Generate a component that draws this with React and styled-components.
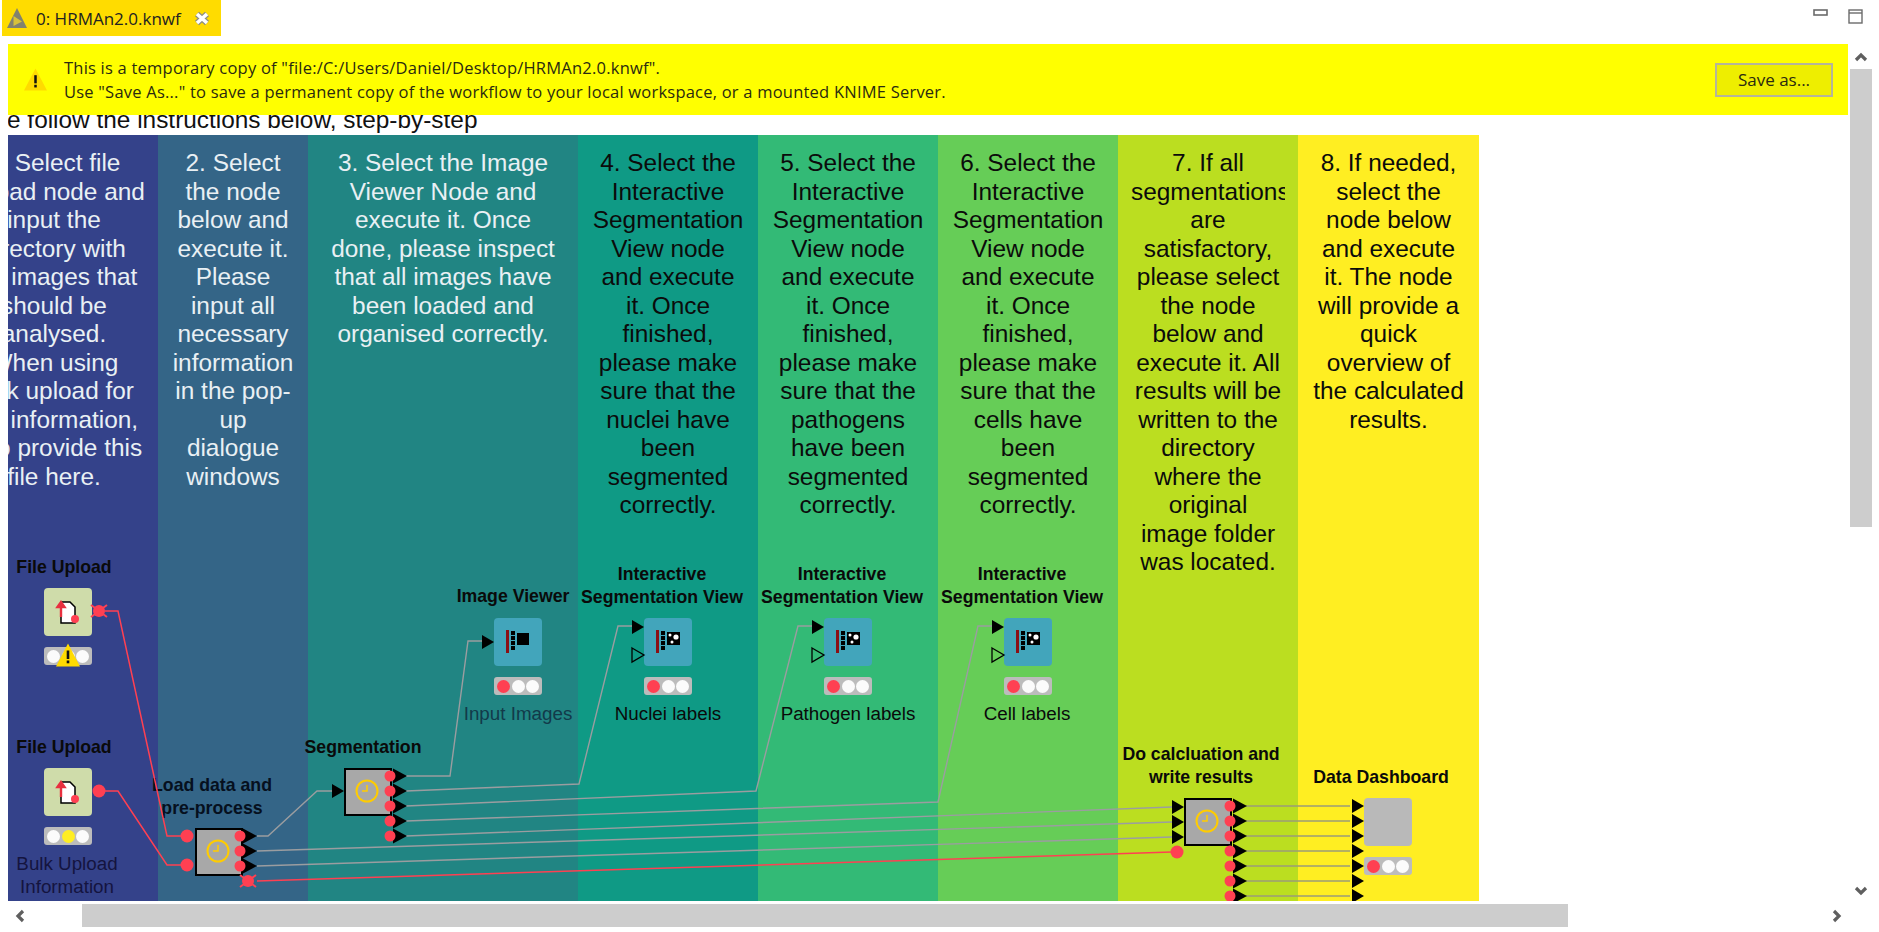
import React from "react";
import styled, { createGlobalStyle } from "styled-components";

// the workflow canvas is scrolled: its origin sits left of the window
const ORIGIN_X = -54;
const ORIGIN_Y = 115;

const GlobalStyle = createGlobalStyle`
  html, body {
    margin: 0;
    padding: 0;
    background: #fff;
    overflow: hidden;
  }
`;

const Page = styled.div`
  width: 1879px;
  height: 932px;
  display: flex;
  flex-direction: column;
  overflow: hidden;
  background: #fff;
  font-family: "Liberation Sans", Arial, sans-serif;
`;

const TabRow = styled.div`
  flex: 0 0 44px;
  display: flex;
  align-items: flex-start;
  padding-left: 2px;
`;

const Tab = styled.div`
  width: 219px;
  height: 36px;
  background: #ffdc00;
  display: flex;
  align-items: center;
  padding-left: 5px;
  box-sizing: border-box;
  font-family: "Open Sans", sans-serif;
  font-size: 17px;
  color: #222;
`;

const TabTitle = styled.span`
  width: 158px;
  margin-left: 9px;
  white-space: nowrap;
`;

const WindowButtons = styled.div`
  margin-left: auto;
  padding: 9px 16px 0 0;
  display: flex;
  gap: 20px;
`;

const Main = styled.div`
  flex: 0 0 857px;
  display: flex;
  gap: 2px;
  padding-left: 8px;
  min-height: 0;
`;

const Editor = styled.div`
  flex: 0 0 1840px;
  display: flex;
  flex-direction: column;
  min-height: 0;
`;

const Banner = styled.div`
  flex: 0 0 71px;
  background: #ffff00;
  display: flex;
  align-items: center;
  padding: 0 15px 0 16px;
  box-sizing: border-box;
`;

const BannerText = styled.div`
  margin-left: 17px;
  font-family: "Open Sans", sans-serif;
  font-size: 16.5px;
  letter-spacing: 0.22px;
  line-height: 24px;
  color: #2a2a10;
  white-space: nowrap;
`;

const SaveButton = styled.button`
  margin-left: auto;
  width: 118px;
  height: 34px;
  background: #eeee00;
  border: 2px solid #b5b59a;
  font-family: "Open Sans", sans-serif;
  font-size: 17px;
  color: #2a2a10;
  padding: 0;
`;

const Viewport = styled.div`
  flex: 1;
  overflow: hidden;
  min-height: 0;
`;

const Canvas = styled.div`
  position: relative;
  width: 1533px;
  height: 786px;
  margin-left: ${ORIGIN_X - 8}px;
`;

const Heading = styled.div`
  height: 20px;
  font-size: 24.4px;
  line-height: 9px;
  color: #111;
  white-space: nowrap;
`;

const Notes = styled.div`
  display: flex;
  height: 766px;
`;

const Note = styled.div`
  flex: 0 0 ${(p) => p.$width}px;
  background: ${(p) => p.$bg};
  color: ${(p) => (p.$light ? "#e9f0f4" : "#0b0b0b")};
  padding: 14px 13px 0 ${(p) => p.$padLeft || 13}px;
  box-sizing: border-box;
  overflow: hidden;
`;

const NoteText = styled.div`
  overflow: hidden;
  text-align: center;
  font-size: 24.4px;
  line-height: 28.5px;
`;

const NoteLine = styled.div`
  white-space: nowrap;
`;

const WireLayer = styled.svg`
  position: absolute;
  left: 0;
  top: 0;
  pointer-events: none;
  z-index: 2;
`;

const NodeUnit = styled.div`
  position: absolute;
  left: ${(p) => p.$x - ORIGIN_X}px;
  top: ${(p) => p.$y - ORIGIN_Y}px;
  width: 48px;
  display: flex;
  flex-direction: column;
  gap: 11px;
  z-index: 1;
`;

const NodeBox = styled.div`
  width: 48px;
  height: 48px;
  box-sizing: border-box;
  background: ${(p) => p.$bg};
  border-radius: ${(p) => (p.$meta ? 0 : 4)}px;
  border: ${(p) => (p.$meta ? "2px solid #000" : "none")};
  display: flex;
  align-items: center;
  justify-content: center;
`;

const Lights = styled.div`
  height: 18px;
  background: #bcbcbc;
  border-radius: 3px;
  display: flex;
  align-items: center;
  justify-content: space-between;
  padding: 0 3px;
`;

const Light = styled.span`
  width: 13px;
  height: 13px;
  border-radius: 50%;
  background: ${(p) => p.$color};
`;

const WarnBadge = styled.div`
  position: absolute;
  left: 12px;
  top: 55px;
  width: 24px;
  height: 24px;
`;

const NodeLabel = styled.div`
  position: absolute;
  left: ${(p) => p.$x - ORIGIN_X}px;
  top: ${(p) => p.$y - ORIGIN_Y}px;
  transform: translate(-50%, -50%);
  text-align: center;
  white-space: nowrap;
  font-size: ${(p) => (p.$bold ? 17.7 : 18.8)}px;
  font-weight: ${(p) => (p.$bold ? 700 : 400)};
  line-height: 22.5px;
  color: ${(p) => p.$color || "#0a0a0a"};
  z-index: 1;
`;

const VScroll = styled.div`
  flex: 0 0 22px;
  display: flex;
  flex-direction: column;
`;

const VThumb = styled.div`
  height: 458px;
  background: #cdcdcd;
`;

const ArrowBox = styled.div`
  display: flex;
  align-items: center;
  justify-content: center;
  flex: 0 0 ${(p) => p.$size}px;
  margin-top: ${(p) => (p.$end ? "auto" : 0)};
  margin-left: ${(p) => (p.$push ? "auto" : 0)};
`;

const HScroll = styled.div`
  flex: 0 0 23px;
  margin-top: 3px;
  display: flex;
  padding-right: 30px;
`;

const HThumb = styled.div`
  width: 1486px;
  margin-left: 42px;
  background: #cdcdcd;
`;

const NOTES = [
  { width: 212, padLeft: 17, bg: "#34428a", light: true, lines: ["1. Select file", "upload node and", "input the", "directory with", "the images that", "should be", "analysed.", "When using", "bulk upload for", "the information,", "also provide this", "file here."] },
  { width: 150, bg: "#346587", light: true, lines: ["2. Select", "the node", "below and", "execute it.", "Please", "input all", "necessary", "information", "in the pop-", "up", "dialogue", "windows"] },
  { width: 270, bg: "#218583", light: true, lines: ["3. Select the Image", "Viewer Node and", "execute it. Once", "done, please inspect", "that all images have", "been loaded and", "organised correctly."] },
  { width: 180, bg: "#0f9a85", lines: ["4. Select the", "Interactive", "Segmentation", "View node", "and execute", "it. Once", "finished,", "please make", "sure that the", "nuclei have", "been", "segmented", "correctly."] },
  { width: 180, bg: "#33ba76", lines: ["5. Select the", "Interactive", "Segmentation", "View node", "and execute", "it. Once", "finished,", "please make", "sure that the", "pathogens", "have been", "segmented", "correctly."] },
  { width: 180, bg: "#66cd57", lines: ["6. Select the", "Interactive", "Segmentation", "View node", "and execute", "it. Once", "finished,", "please make", "sure that the", "cells have", "been", "segmented", "correctly."] },
  { width: 180, bg: "#bbde20", lines: ["7. If all", "segmentations", "are", "satisfactory,", "please select", "the node", "below and", "execute it. All", "results will be", "written to the", "directory", "where the", "original", "image folder", "was located."] },
  { width: 181, bg: "#ffee22", lines: ["8. If needed,", "select the", "node below", "and execute", "it. The node", "will provide a", "quick", "overview of", "the calculated", "results."] },
];

const RED = "#ff4052";
const WHITE = "#fbfbfb";

const GREY_WIRES = [
  "257,836 268,836 317,791 332,791",
  "406,776 450,776 468,641 482,641",
  "406,791 579,784 618,626 632,626",
  "406,806 756,791 798,626 812,626",
  "406,821 938,802 978,626 992,626",
  "406,836 1172,807",
  "257,851 1172,822",
  "257,866 1172,837",
];

const RED_WIRES = [
  "105,611 118,611 167,836 181,836",
  "105,791 118,791 167,865 181,865",
  "257,881 1172,852",
];

const Clock = () => (
  <svg width="28" height="28" viewBox="0 0 28 28" fill="none" stroke="#ffcc00" strokeWidth="2">
    <circle cx="13" cy="13" r="10.5" />
    <path d="M13 7v6H8" strokeWidth="1.5" />
  </svg>
);

const UploadIcon = () => (
  <svg width="48" height="48" viewBox="0 0 48 48">
    <path d="M17 14h9l5 5v16H17z" fill="#fff" stroke="#000" strokeWidth="1.5" />
    <path d="M17 29V15M13.5 19l3.5-5 3.5 5z" fill="#e8303f" stroke="#e8303f" strokeWidth="2.4" />
    <circle cx="31" cy="31" r="4" fill={RED} />
  </svg>
);

const ViewIcon = ({ interactive }) => (
  <svg width="48" height="48" viewBox="0 0 48 48">
    <rect x="12" y="12" width="3" height="23" fill="#8a0f14" />
    {[13, 18, 23, 28].map((y) => (
      <rect key={y} x="17" y={y} width="4" height="4" fill="#000" />
    ))}
    {interactive ? (
      <>
        <rect x="23" y="14" width="13" height="13" fill="#000" />
        <circle cx="32" cy="19" r="2.6" fill="#fff" />
        <circle cx="26" cy="17" r="1.5" fill="#fff" />
        <circle cx="28" cy="24" r="1.5" fill="#fff" />
      </>
    ) : (
      <rect x="23" y="15" width="12" height="12" fill="#000" />
    )}
  </svg>
);

const WarnIcon = ({ size }) => (
  <svg width={size} height={size} viewBox="0 0 24 24">
    <path d="M12 0.5L24 23.5H0z" fill="#ffdb00" />
    <rect x="10.7" y="7.5" width="2.6" height="8.5" fill="#111" />
    <rect x="10.7" y="17.5" width="2.6" height="2.8" fill="#111" />
  </svg>
);

const KnimeIcon = () => (
  <svg width="20" height="20" viewBox="0 0 20 20">
    <path d="M10 0L20 20H0z" fill="#82826e" />
    <path d="M6.5 8L15 13.5 6.5 18z" fill="#d8c23a" />
  </svg>
);

const CloseIcon = () => (
  <svg width="16" height="15" viewBox="0 0 16 15">
    <path d="M3 3l10 9M13 3L3 12" stroke="#8f8f80" strokeWidth="6" />
    <path d="M3 3l10 9M13 3L3 12" stroke="#fff" strokeWidth="3.6" />
  </svg>
);

const Chevron = ({ d }) => (
  <svg width="14" height="14" viewBox="0 0 14 14" fill="none" stroke="#5f5f5f" strokeWidth="3.2">
    <path d={d} />
  </svg>
);

const InPort = ({ x, y, hollow }) => (
  <polygon
    points={`${x},${y - 7} ${x + 12},${y} ${x},${y + 7}`}
    fill={hollow ? "none" : "#000"}
    stroke={hollow ? "#000" : "none"}
    strokeWidth="1.3"
  />
);

const OutPort = ({ x, y }) => (
  <>
    <polygon points={`${x + 3},${y - 7.5} ${x + 17},${y} ${x + 3},${y + 7.5}`} fill="#000" />
    <circle cx={x} cy={y} r="5.5" fill={RED} />
  </>
);

const Dot = ({ x, y, r = 6.5 }) => <circle cx={x} cy={y} r={r} fill={RED} />;

const CrossedDot = ({ x, y }) => (
  <>
    <circle cx={x} cy={y} r="6" fill={RED} />
    <path d={`M${x - 8} ${y - 6}L${x + 8} ${y + 6}M${x + 8} ${y - 6}L${x - 8} ${y + 6}`} stroke={RED} strokeWidth="2" />
  </>
);

const Wires = () => {
  const calcRows = [806, 821, 836, 851, 866, 881, 896];
  return (
    <WireLayer width="1533" height="786" viewBox={`${ORIGIN_X} ${ORIGIN_Y} 1533 786`} fill="none">
      {GREY_WIRES.map((points) => (
        <polyline key={points} points={points} stroke="#9b9da0" strokeWidth="1.4" />
      ))}
      {RED_WIRES.map((points) => (
        <polyline key={points} points={points} stroke={RED} strokeWidth="1.5" />
      ))}
      {calcRows.map((y) => (
        <polyline key={y} points={`1246,${y} 1350,${y}`} stroke="#9b9b78" strokeWidth="1.6" />
      ))}

      <CrossedDot x={99} y={611} />
      <Dot x={99} y={791} />

      <Dot x={187} y={836} />
      <Dot x={187} y={865} />
      {[836, 851, 866].map((y) => (
        <OutPort key={y} x={240} y={y} />
      ))}
      <CrossedDot x={248} y={881} />

      <InPort x={332} y={791} />
      {[776, 791, 806, 821, 836].map((y) => (
        <OutPort key={y} x={390} y={y} />
      ))}

      <InPort x={482} y={642} />
      {[632, 812, 992].map((x) => (
        <React.Fragment key={x}>
          <InPort x={x} y={627} />
          <InPort x={x} y={655} hollow />
        </React.Fragment>
      ))}

      {[807, 822, 837].map((y) => (
        <InPort key={y} x={1172} y={y} />
      ))}
      <Dot x={1177} y={852} />
      {calcRows.map((y) => (
        <React.Fragment key={y}>
          <OutPort x={1230} y={y} />
          <InPort x={1352} y={y} />
        </React.Fragment>
      ))}
    </WireLayer>
  );
};

const Status = ({ colors }) => (
  <Lights>
    {colors.map((color, i) => (
      <Light key={i} $color={color} />
    ))}
  </Lights>
);

const ViewNode = ({ x, interactive }) => (
  <NodeUnit $x={x} $y={618}>
    <NodeBox $bg="#42a5bb">
      <ViewIcon interactive={interactive} />
    </NodeBox>
    <Status colors={[RED, WHITE, WHITE]} />
  </NodeUnit>
);

const MetaNode = ({ x, y }) => (
  <NodeUnit $x={x} $y={y}>
    <NodeBox $bg="#a8a8a8" $meta>
      <Clock />
    </NodeBox>
  </NodeUnit>
);

const Workflow = () => (
  <Canvas>
    <Heading>Please follow the instructions below, step-by-step</Heading>
    <Notes>
      {NOTES.map((note) => (
        <Note key={note.lines[0]} $width={note.width} $padLeft={note.padLeft} $bg={note.bg} $light={note.light}>
          <NoteText>
            {note.lines.map((line) => (
              <NoteLine key={line}>{line}</NoteLine>
            ))}
          </NoteText>
        </Note>
      ))}
    </Notes>

    <NodeLabel $x={64} $y={567} $bold>File Upload</NodeLabel>
    <NodeUnit $x={44} $y={588}>
      <NodeBox $bg="#cfdcaa">
        <UploadIcon />
      </NodeBox>
      <Status colors={[WHITE, WHITE, WHITE]} />
      <WarnBadge>
        <WarnIcon size={24} />
      </WarnBadge>
    </NodeUnit>

    <NodeLabel $x={64} $y={747} $bold>File Upload</NodeLabel>
    <NodeUnit $x={44} $y={768}>
      <NodeBox $bg="#cfdcaa">
        <UploadIcon />
      </NodeBox>
      <Status colors={[WHITE, "#ffee22", WHITE]} />
    </NodeUnit>
    <NodeLabel $x={67} $y={875} $color="#14143f">Bulk Upload<br />Information</NodeLabel>

    <NodeLabel $x={212} $y={796} $bold $color="#06101e">Load data and<br />pre-process</NodeLabel>
    <MetaNode x={195} y={828} />

    <NodeLabel $x={363} $y={747} $bold>Segmentation</NodeLabel>
    <MetaNode x={344} y={768} />

    <NodeLabel $x={513} $y={596} $bold>Image Viewer</NodeLabel>
    <ViewNode x={494} />
    <NodeLabel $x={518} $y={714} $color="#123a4a">Input Images</NodeLabel>

    <NodeLabel $x={662} $y={585} $bold>Interactive<br />Segmentation View</NodeLabel>
    <ViewNode x={644} interactive />
    <NodeLabel $x={668} $y={714}>Nuclei labels</NodeLabel>

    <NodeLabel $x={842} $y={585} $bold>Interactive<br />Segmentation View</NodeLabel>
    <ViewNode x={824} interactive />
    <NodeLabel $x={848} $y={714}>Pathogen labels</NodeLabel>

    <NodeLabel $x={1022} $y={585} $bold>Interactive<br />Segmentation View</NodeLabel>
    <ViewNode x={1004} interactive />
    <NodeLabel $x={1027} $y={714}>Cell labels</NodeLabel>

    <NodeLabel $x={1201} $y={765} $bold>Do calcluation and<br />write results</NodeLabel>
    <MetaNode x={1184} y={798} />

    <NodeLabel $x={1381} $y={777} $bold>Data Dashboard</NodeLabel>
    <NodeUnit $x={1364} $y={798}>
      <NodeBox $bg="#b9b9b9" />
      <Status colors={[RED, WHITE, WHITE]} />
    </NodeUnit>

    <Wires />
  </Canvas>
);

export default function App() {
  return (
    <Page>
      <GlobalStyle />
      <TabRow>
        <Tab>
          <KnimeIcon />
          <TabTitle>0: HRMAn2.0.knwf</TabTitle>
          <CloseIcon />
        </Tab>
        <WindowButtons>
          <svg width="15" height="7" viewBox="0 0 15 7" fill="#fff" stroke="#6b6b6b" strokeWidth="1.6">
            <rect x="1" y="1" width="13" height="5" />
          </svg>
          <svg width="15" height="15" viewBox="0 0 15 15" fill="#fff" stroke="#6b6b6b" strokeWidth="1.4">
            <rect x="1" y="1" width="13" height="13" />
            <path d="M1 4h13" />
          </svg>
        </WindowButtons>
      </TabRow>

      <Main>
        <Editor>
          <Banner>
            <WarnIcon size={23} />
            <BannerText>
              This is a temporary copy of "file:/C:/Users/Daniel/Desktop/HRMAn2.0.knwf".
              <br />
              Use "Save As..." to save a permanent copy of the workflow to your local workspace, or a mounted KNIME Server.
            </BannerText>
            <SaveButton>Save as...</SaveButton>
          </Banner>
          <Viewport>
            <Workflow />
          </Viewport>
        </Editor>
        <VScroll>
          <ArrowBox $size={25}>
            <Chevron d="M2 10l5-5 5 5" />
          </ArrowBox>
          <VThumb />
          <ArrowBox $size={20} $end>
            <Chevron d="M2 4l5 5 5-5" />
          </ArrowBox>
        </VScroll>
      </Main>

      <HScroll>
        <ArrowBox $size={40}>
          <Chevron d="M10 2L5 7l5 5" />
        </ArrowBox>
        <HThumb />
        <ArrowBox $size={24} $push>
          <Chevron d="M4 2l5 5-5 5" />
        </ArrowBox>
      </HScroll>
    </Page>
  );
}
